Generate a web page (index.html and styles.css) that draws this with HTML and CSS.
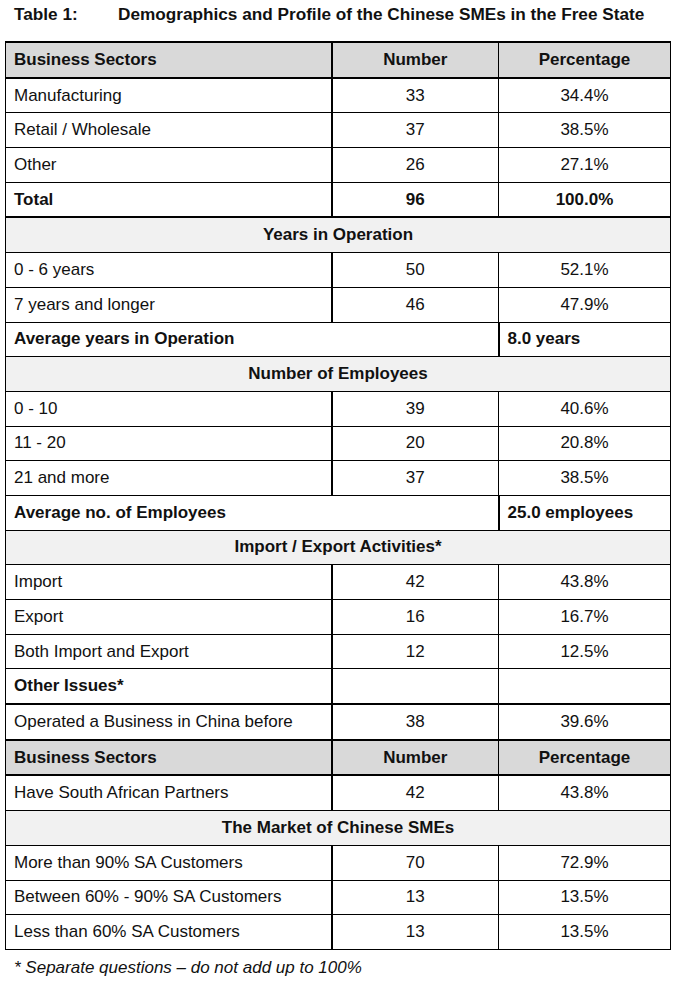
FILE: index.html
```html
<!DOCTYPE html>
<html>
<head>
<meta charset="utf-8">
<link rel="stylesheet" href="styles.css">
</head>
<body>
<div class="page">
  <h1 class="title"><span class="label">Table 1:</span>Demographics and Profile of the Chinese SMEs in the Free State</h1>
  <table class="tbl">
    <colgroup><col class="c1"><col class="c2"><col class="c3"></colgroup>
    <tr class="head thick-b"><th class="l">Business Sectors</th><th>Number</th><th>Percentage</th></tr>
    <tr><td class="l">Manufacturing</td><td>33</td><td>34.4%</td></tr>
    <tr><td class="l">Retail / Wholesale</td><td>37</td><td>38.5%</td></tr>
    <tr><td class="l">Other</td><td>26</td><td>27.1%</td></tr>
    <tr class="bold thick-b"><td class="l">Total</td><td>96</td><td>100.0%</td></tr>
    <tr class="section"><td colspan="3">Years in Operation</td></tr>
    <tr><td class="l">0 - 6 years</td><td>50</td><td>52.1%</td></tr>
    <tr><td class="l">7 years and longer</td><td>46</td><td>47.9%</td></tr>
    <tr class="bold"><td class="l" colspan="2">Average years in Operation</td><td class="l">8.0 years</td></tr>
    <tr class="section"><td colspan="3">Number of Employees</td></tr>
    <tr><td class="l">0 - 10</td><td>39</td><td>40.6%</td></tr>
    <tr><td class="l">11 - 20</td><td>20</td><td>20.8%</td></tr>
    <tr><td class="l">21 and more</td><td>37</td><td>38.5%</td></tr>
    <tr class="bold"><td class="l" colspan="2">Average no. of Employees</td><td class="l">25.0 employees</td></tr>
    <tr class="section"><td colspan="3">Import / Export Activities*</td></tr>
    <tr><td class="l">Import</td><td>42</td><td>43.8%</td></tr>
    <tr><td class="l">Export</td><td>16</td><td>16.7%</td></tr>
    <tr><td class="l">Both Import and Export</td><td>12</td><td>12.5%</td></tr>
    <tr class="bold thick-b"><td class="l">Other Issues*</td><td></td><td></td></tr>
    <tr class="thick-b"><td class="l">Operated a Business in China before</td><td>38</td><td>39.6%</td></tr>
    <tr class="head thick-b"><th class="l">Business Sectors</th><th>Number</th><th>Percentage</th></tr>
    <tr><td class="l">Have South African Partners</td><td>42</td><td>43.8%</td></tr>
    <tr class="section"><td colspan="3">The Market of Chinese SMEs</td></tr>
    <tr><td class="l">More than 90% SA Customers</td><td>70</td><td>72.9%</td></tr>
    <tr><td class="l">Between 60% - 90% SA Customers</td><td>13</td><td>13.5%</td></tr>
    <tr><td class="l">Less than 60% SA Customers</td><td>13</td><td>13.5%</td></tr>
  </table>
  <p class="note">* Separate questions – do not add up to 100%</p>
</div>
</body>
</html>
```
FILE: styles.css
```css
html, body {
  margin: 0;
  padding: 0;
  background: #fff;
}
body {
  font-family: "Liberation Sans", Arial, sans-serif;
  color: #111;
}
.page {
  padding: 4px 0 0 5px;
}
.title {
  margin: 0 0 17px 9px;
  font-size: 17.2px;
  line-height: 20px;
  font-weight: bold;
}
.title .label {
  display: inline-block;
  width: 104px;
}
.tbl {
  border-collapse: collapse;
  width: 665px;
  table-layout: fixed;
  font-size: 17px;
  border-top: 2px solid #000;
  border-left: 1px solid #000;
  border-right: 1px solid #000;
  border-bottom: 1.5px solid #000;
}
.c1 { width: 326px; }
.c2 { width: 167px; }
.c3 { width: 172px; }
.tbl td, .tbl th {
  height: 33.7px;
  padding: 0 8px;
  text-align: center;
  border-top: 1.5px solid #000;
  border-bottom: 1.5px solid #000;
  font-weight: normal;
}
.tbl td:first-child, .tbl th:first-child {
  border-right: 2px solid #000;
}
.tbl td:nth-child(2), .tbl th:nth-child(2) {
  border-right: 1.5px solid #000;
}
.tbl .l {
  text-align: left;
}
.tbl .head th {
  background: #d9d9d9;
  font-weight: bold;
}
.tbl .bold td {
  font-weight: bold;
}
.tbl .thick-b td, .tbl .thick-b th {
  border-bottom: 2.5px solid #000;
}
.tbl .section td {
  background: #f1f1f1;
  font-weight: bold;
  text-align: center;
  border-right: none;
}
.note {
  margin: 8px 0 0 9px;
  font-size: 17px;
  font-style: italic;
}
```
